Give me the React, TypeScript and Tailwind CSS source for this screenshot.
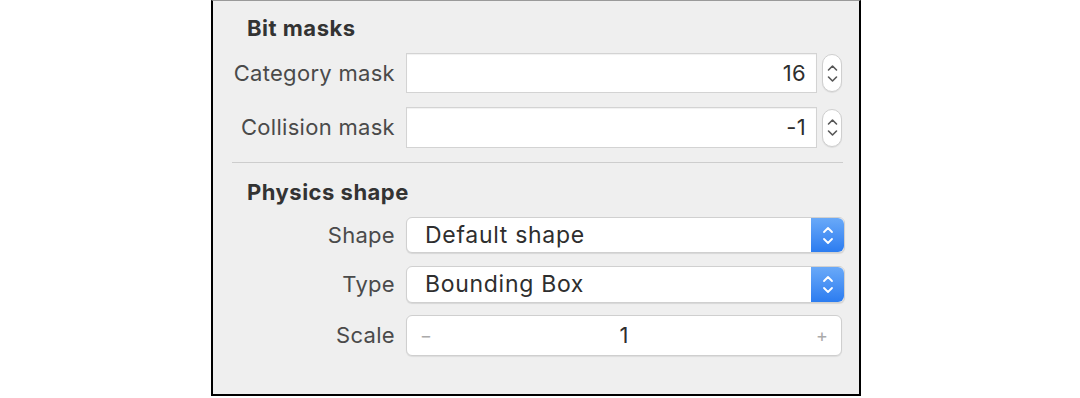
import React from 'react';

const font = { fontFamily: 'Inter, "Liberation Sans", sans-serif' };

const Stepper = () => (
  <div className="flex h-[38px] w-[20px] flex-col items-center justify-center gap-[3px] rounded-full border border-[#cfcfcf] bg-white shadow-[0_1px_1px_rgba(0,0,0,0.08)]">
    <svg width="11" height="8" viewBox="0 0 11 8" fill="none">
      <path d="M1.5 6 L5.5 2 L9.5 6" stroke="#555" strokeWidth="1.6" strokeLinecap="round" strokeLinejoin="round" />
    </svg>
    <svg width="11" height="8" viewBox="0 0 11 8" fill="none">
      <path d="M1.5 2 L5.5 6 L9.5 2" stroke="#555" strokeWidth="1.6" strokeLinecap="round" strokeLinejoin="round" />
    </svg>
  </div>
);

const PopupArrows = () => (
  <div className="flex h-full w-[33px] flex-col items-center justify-center gap-[3px] rounded-r-md bg-gradient-to-b from-[#69a9f8] to-[#2b7cf0]">
    <svg width="12" height="8" viewBox="0 0 12 8" fill="none">
      <path d="M2 6 L6 2 L10 6" stroke="#fff" strokeWidth="1.8" strokeLinecap="round" strokeLinejoin="round" />
    </svg>
    <svg width="12" height="8" viewBox="0 0 12 8" fill="none">
      <path d="M2 2 L6 6 L10 2" stroke="#fff" strokeWidth="1.8" strokeLinecap="round" strokeLinejoin="round" />
    </svg>
  </div>
);

const Label = ({ children }: { children: React.ReactNode }) => (
  <div className="w-[193px] shrink-0 pr-[11px] text-right text-[22px] tracking-[0.3px] text-[#4a4a4a]">{children}</div>
);

const NumberRow = ({ label, value, className }: { label: string; value: string; className: string }) => (
  <div className={`flex items-center ${className}`}>
    <Label>{label}</Label>
    <div className="flex h-full w-[411px] items-center justify-end border border-[#d3d3d3] bg-white pr-[10px] text-[22px] tracking-[0.3px] text-[#2e2e2e] shadow-[inset_0_1px_1px_rgba(0,0,0,0.06)]">
      {value}
    </div>
    <div className="ml-[5px]">
      <Stepper />
    </div>
  </div>
);

const PopupRow = ({ label, value, className }: { label: string; value: string; className: string }) => (
  <div className={`flex items-center ${className}`}>
    <Label>{label}</Label>
    <div className="flex h-full w-[439px] items-center rounded-md border border-[#d0d0d0] bg-white shadow-[0_1px_1px_rgba(0,0,0,0.1)]">
      <div className="flex-1 pl-[18px] text-[23px] tracking-[0.7px] text-[#2e2e2e]">{value}</div>
      <PopupArrows />
    </div>
  </div>
);

export default function App() {
  return (
    <div className="h-[398px] w-[1080px] bg-white" style={font}>
      <div className="ml-[211px] flex h-[396px] w-[650px] flex-col border-x-2 border-b-2 border-t border-x-black border-b-black border-t-[#9a9a9a] bg-[#efefef]">
        <div className="mt-[17px] h-[20px] pl-[34px] text-[22px] font-bold leading-[20px] tracking-[0.5px] text-[#333]">Bit masks</div>

        <NumberRow label="Category mask" value="16" className="mt-[15px] h-[40px]" />
        <NumberRow label="Collision mask" value="-1" className="mt-[14px] h-[41px]" />

        <div className="ml-[19px] mr-[16px] mt-[14px] h-px bg-[#cdcdcd]" />

        <div className="mt-[19px] h-[20px] pl-[34px] text-[22px] font-bold leading-[20px] tracking-[0.5px] text-[#333]">Physics shape</div>

        <PopupRow label="Shape" value="Default shape" className="mt-[15px] h-[36px]" />
        <PopupRow label="Type" value="Bounding Box" className="mt-[13px] h-[37px]" />

        <div className="mt-[12px] flex h-[41px] items-center">
          <Label>Scale</Label>
          <div className="flex h-full w-[436px] items-center rounded-md border border-[#cfcfcf] bg-white px-[13px] shadow-[0_1px_1px_rgba(0,0,0,0.08)]">
            <span className="text-[18px] text-[#aaa]">−</span>
            <span className="flex-1 text-center text-[22px] text-[#2e2e2e]">1</span>
            <span className="text-[18px] text-[#aaa]">+</span>
          </div>
        </div>
      </div>
    </div>
  );
}
